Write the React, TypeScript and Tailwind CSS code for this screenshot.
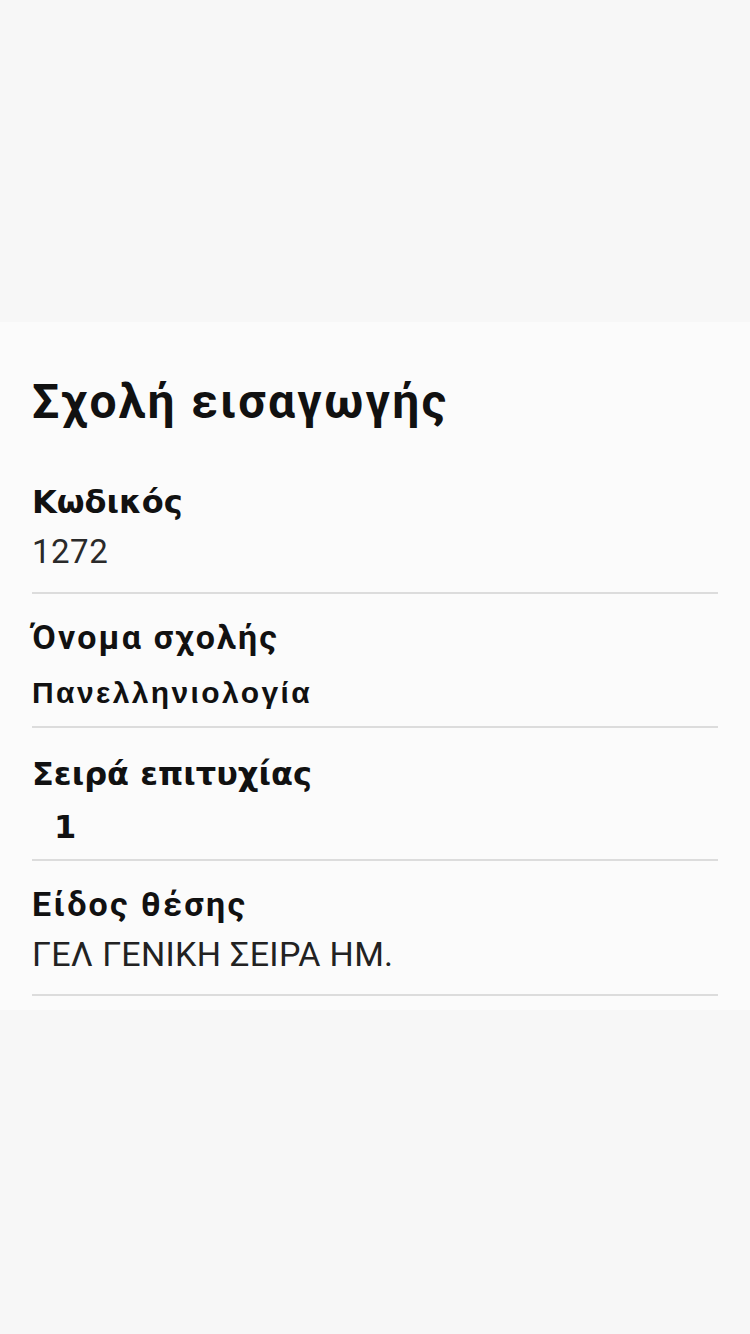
const roboto = { fontFamily: 'Roboto, "Noto Sans", sans-serif' }

type Field = {
  label: string
  value: string
  labelFont: string
  valueFont: string
  rowClass: string
  valueClass: string
}

const fields: Field[] = [
  {
    label: 'Κωδικός',
    value: '1272',
    labelFont: "font-['DejaVu_Sans',sans-serif] font-bold text-[32px] text-[#111]",
    valueFont: "font-['Roboto',sans-serif] text-[33px] tracking-[0.5px] text-[#2a2a2a]",
    rowClass: 'pt-[52px]',
    valueClass: 'mt-[10px] mb-[20px]',
  },
  {
    label: 'Όνομα σχολής',
    value: 'Πανελληνιολογία',
    labelFont: "font-['Roboto',sans-serif] font-bold text-[34px] tracking-[2.2px] text-[#111]",
    valueFont: "font-['Liberation_Sans',sans-serif] font-bold text-[30px] tracking-[2.4px] text-[#111]",
    rowClass: 'pt-[23px]',
    valueClass: 'mt-[16px] mb-[13px]',
  },
  {
    label: 'Σειρά επιτυχίας',
    value: '1',
    labelFont: "font-['DejaVu_Sans',sans-serif] font-bold text-[32px] text-[#111]",
    valueFont: "font-['DejaVu_Sans',sans-serif] font-bold text-[32px] text-[#111] pl-[22px]",
    rowClass: 'pt-[26px]',
    valueClass: 'mt-[13px] mb-[12px]',
  },
  {
    label: 'Είδος θέσης',
    value: 'ΓΕΛ ΓΕΝΙΚΗ ΣΕΙΡΑ ΗΜ.',
    labelFont: "font-['Roboto',sans-serif] font-bold text-[34px] tracking-[2.3px] text-[#111]",
    valueFont: "font-['Roboto',sans-serif] text-[34px] tracking-[0.3px] text-[#222]",
    rowClass: 'pt-[23px]',
    valueClass: 'mt-[10px] mb-[20px]',
  },
]

export default function App() {
  return (
    <div className="min-h-[1334px] w-[750px] bg-[#f7f7f7]" style={roboto}>
      <div className="h-[322px] bg-[#f7f7f7]" />

      <div className="bg-[#fbfbfb] px-[32px] pb-[14px]">
        <h1 className="pt-[52px] font-['Roboto',sans-serif] text-[48px] font-bold leading-[56px] tracking-[2.3px] text-[#111]">
          Σχολή εισαγωγής
        </h1>

        {fields.map((f) => (
          <div key={f.label} className={`${f.rowClass} border-b-2 border-[#dcdcdc]`}>
            <p className={`${f.labelFont} leading-[40px]`}>{f.label}</p>
            <p className={`${f.valueFont} ${f.valueClass} leading-[40px]`}>{f.value}</p>
          </div>
        ))}
      </div>
    </div>
  )
}
